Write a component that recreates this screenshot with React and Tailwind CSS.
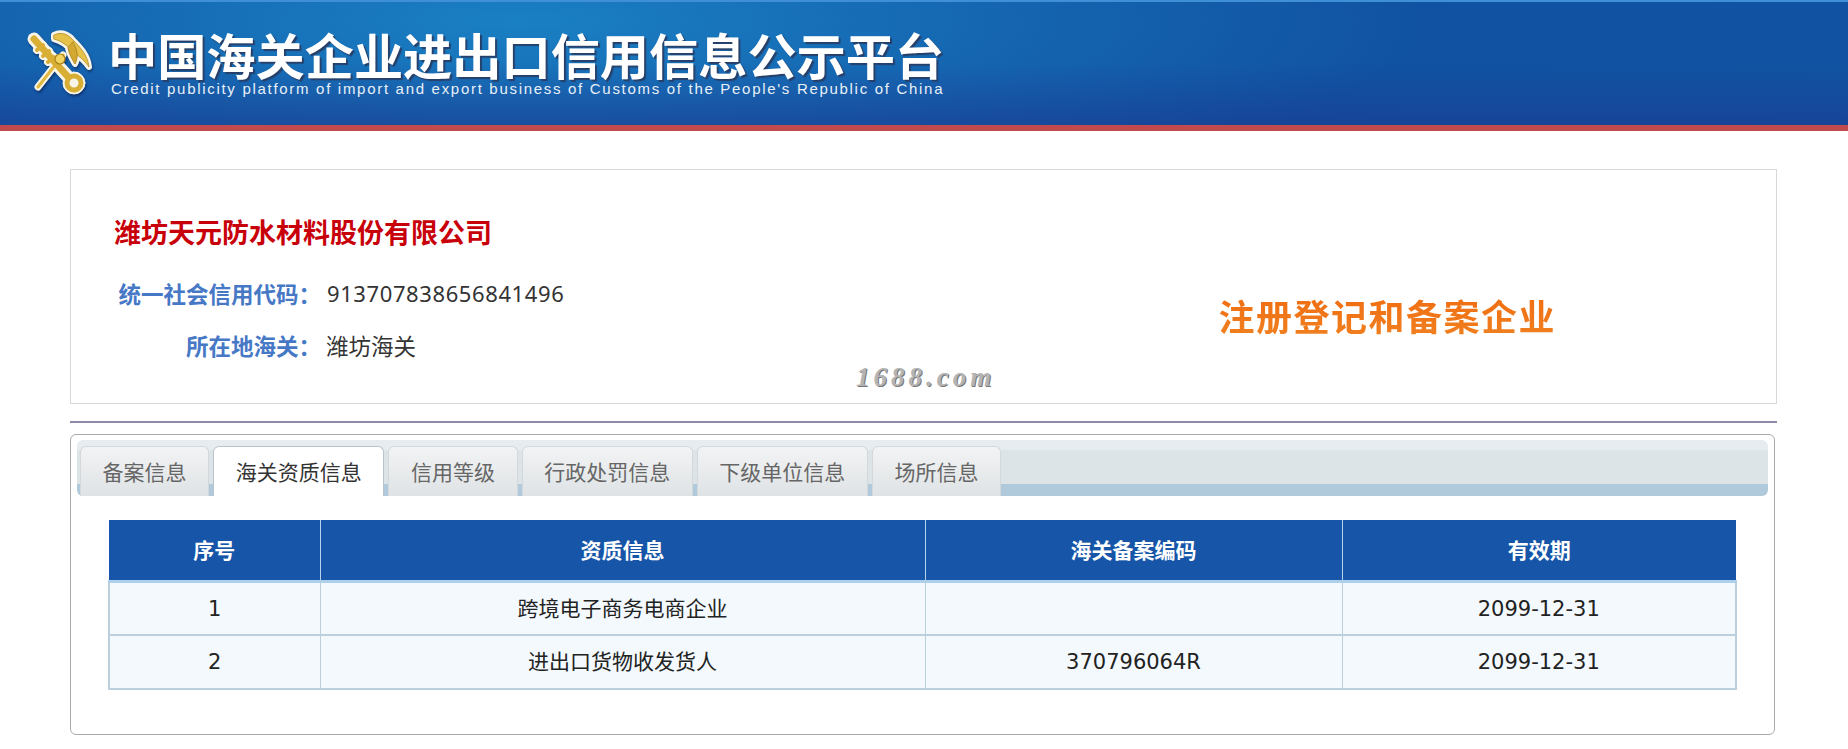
import React from 'react';

const CJK = "font-['Noto_Sans_CJK_SC','Noto_Sans',sans-serif]";

const tabs = ['备案信息', '海关资质信息', '信用等级', '行政处罚信息', '下级单位信息', '场所信息'];

const rows = [
  ['1', '跨境电子商务电商企业', '', '2099-12-31'],
  ['2', '进出口货物收发货人', '370796064R', '2099-12-31'],
];

const crescent = 'M27 7 C35 3 42 7 46 12 C52 18 61 27 62 39 C57 32 52 28 46 24 C42 19 35 13 27 11 Z';
const wing = 'M46 14 C50 21 52 29 48 36 C45 31 42 26 41 20 Z';
const key = 'M7 11 L42 50';
const teeth = 'M10 22 L16 17 M16 28 L22 23 M21 34 L27 29';
const staff = 'M11 59 L36 27';

const CustomsLogo = () => (
  <svg width="68" height="68" viewBox="0 0 68 68" className="shrink-0 drop-shadow-[1px_2px_1px_rgba(10,30,80,0.6)]">
    <g strokeLinecap="round" strokeLinejoin="round" fill="none">
      <g stroke="#f8f5e8">
        <path d={key} strokeWidth="13" />
        <path d={teeth} strokeWidth="8" />
        <path d={staff} strokeWidth="7" />
        <path d={crescent} strokeWidth="6" fill="#f8f5e8" />
        <path d={wing} strokeWidth="6" fill="#f8f5e8" />
        <circle cx="47" cy="55" r="11" fill="#f8f5e8" />
      </g>
      <path d={staff} stroke="#e0b93e" strokeWidth="3" />
      <path d={crescent} fill="#e6c24a" stroke="#b48c24" strokeWidth="0.8" />
      <path d={wing} fill="#d3a82e" stroke="#a87f1c" strokeWidth="0.8" />
      <path d={key} stroke="#d8ae34" strokeWidth="7" />
      <path d={teeth} stroke="#d8ae34" strokeWidth="4" />
      <circle cx="47" cy="55" r="7" fill="#f8f5e8" stroke="#d8ae34" strokeWidth="5" />
      <circle cx="33" cy="31" r="5" fill="#f2d45e" stroke="#a87f1c" strokeWidth="1.2" />
    </g>
  </svg>
);

export default function App() {
  return (
    <div className={`min-h-[749px] bg-white ${CJK}`}>
      <header className="h-[131px] border-b-[6px] border-[#c04a4e] border-t-2 border-t-[#3f8fd6] bg-[linear-gradient(transparent_50%,rgba(30,50,140,0.45)_100%),radial-gradient(ellipse_900px_190px_at_28%_15%,#1a80c4_0%,#1565b0_55%,transparent_100%),linear-gradient(100deg,#0f52a2_0%,#1153a2_100%)] flex items-start pl-[27px] pt-[26px] gap-[13px]">
        <CustomsLogo />
        <div className="flex flex-col">
          <h1 className="text-[49.2px] leading-[52px] font-bold text-white whitespace-nowrap [text-shadow:2px_2px_1px_#27406a]">
            中国海关企业进出口信用信息公示平台
          </h1>
          <p className="ml-[3px] mt-[1px] font-['Liberation_Sans',sans-serif] text-[15px] leading-[16px] tracking-[1.7px] text-[#e8f0f8] whitespace-nowrap">
            Credit publicity platform of import and export business of Customs of the People's Republic of China
          </p>
        </div>
      </header>

      <main className="pl-[70px] pt-[38px]">
        <section className="relative w-[1707px] h-[235px] border border-[#d8d8d8] flex">
          <div className="pl-[43px] pt-[42px]">
            <h2 className="text-[27px] leading-[40px] font-bold text-[#c8000a]">潍坊天元防水材料股份有限公司</h2>
            <dl className="mt-[15px] text-[22.5px] leading-[52px]">
              <div className="flex">
                <dt className="w-[207px] text-right font-bold whitespace-nowrap text-[#4678c6]">统一社会信用代码：</dt>
                <dd className="ml-[6px] font-['Noto_Sans',sans-serif] text-[22px] tracking-[0.6px] text-[#333]">913707838656841496</dd>
              </div>
              <div className="flex">
                <dt className="w-[207px] text-right font-bold whitespace-nowrap text-[#4678c6]">所在地海关：</dt>
                <dd className="ml-[5px] text-[22.5px] font-normal text-[#333]">潍坊海关</dd>
              </div>
            </dl>
          </div>
          <div className="ml-auto mr-[220px] mt-[122px] text-[36px] leading-[46px] font-bold tracking-[1.5px] text-transparent bg-clip-text bg-gradient-to-b from-[#f06c10] to-[#ee9a30]">
            注册登记和备案企业
          </div>
          <span className="absolute left-[785px] top-[191px] font-['Liberation_Serif',serif] italic font-bold text-[27px] leading-[32px] tracking-[4px] text-[#b4b4b4] [text-shadow:1px_1px_0_#777]">
            1688.com
          </span>
        </section>

        <div className="w-[1707px] h-[2px] mt-[17px] bg-[#8f89a8]" />

        <section className="w-[1705px] h-[301px] mt-[11px] border border-[#aaaaaa] rounded-[6px] pt-[5px] px-[6px]">
          <div className="relative h-[56px] rounded-[6px] bg-[linear-gradient(#e6ecef_0,#e6ecef_16%,#dde4e7_20%,#dde4e7_78%,#b0c9db_79%,#b0c9db_100%)] pl-[3px] pt-[6px] flex items-end gap-[4px]">
            {tabs.map((t, i) => (
              <button
                key={t}
                className={
                  i === 1
                    ? 'h-[50px] px-[21.6px] text-[21px] rounded-t-[6px] bg-white text-[#333] border border-b-0 border-[#b8c4cc]'
                    : 'h-[50px] px-[21.6px] text-[21px] rounded-t-[6px] bg-gradient-to-b from-[#f2f3f4] to-[#dfe3e5] text-[#666] border border-b-0 border-[#d2d8dc]'
                }
              >
                {t}
              </button>
            ))}
          </div>

          <table className="mt-[24px] ml-[31px] w-[1629px] table-fixed border-collapse text-[21px]">
            <thead>
              <tr className="h-[61px] bg-[#1655a8] text-white border-b-[3px] border-[#aed0ea]">
                <th className="w-[211px] font-bold text-[21px] border-r border-[#b5d3ea]">序号</th>
                <th className="w-[605px] font-bold text-[21px] border-r border-[#b5d3ea]">资质信息</th>
                <th className="w-[417px] font-bold text-[21px] border-r border-[#b5d3ea]">海关备案编码</th>
                <th className="font-bold text-[21px]">有效期</th>
              </tr>
            </thead>
            <tbody>
              {rows.map((r) => (
                <tr key={r[0]} className="h-[54px] bg-[#f3f9fd] text-[#222] border-2 border-[#bccfdd]">
                  {r.map((c, i) => (
                    <td key={i} className="pt-[2px] text-center border-r border-[#bccfdd] font-['DejaVu_Sans','Noto_Sans_CJK_SC',sans-serif]">
                      {c}
                    </td>
                  ))}
                </tr>
              ))}
            </tbody>
          </table>
        </section>
      </main>
    </div>
  );
}
